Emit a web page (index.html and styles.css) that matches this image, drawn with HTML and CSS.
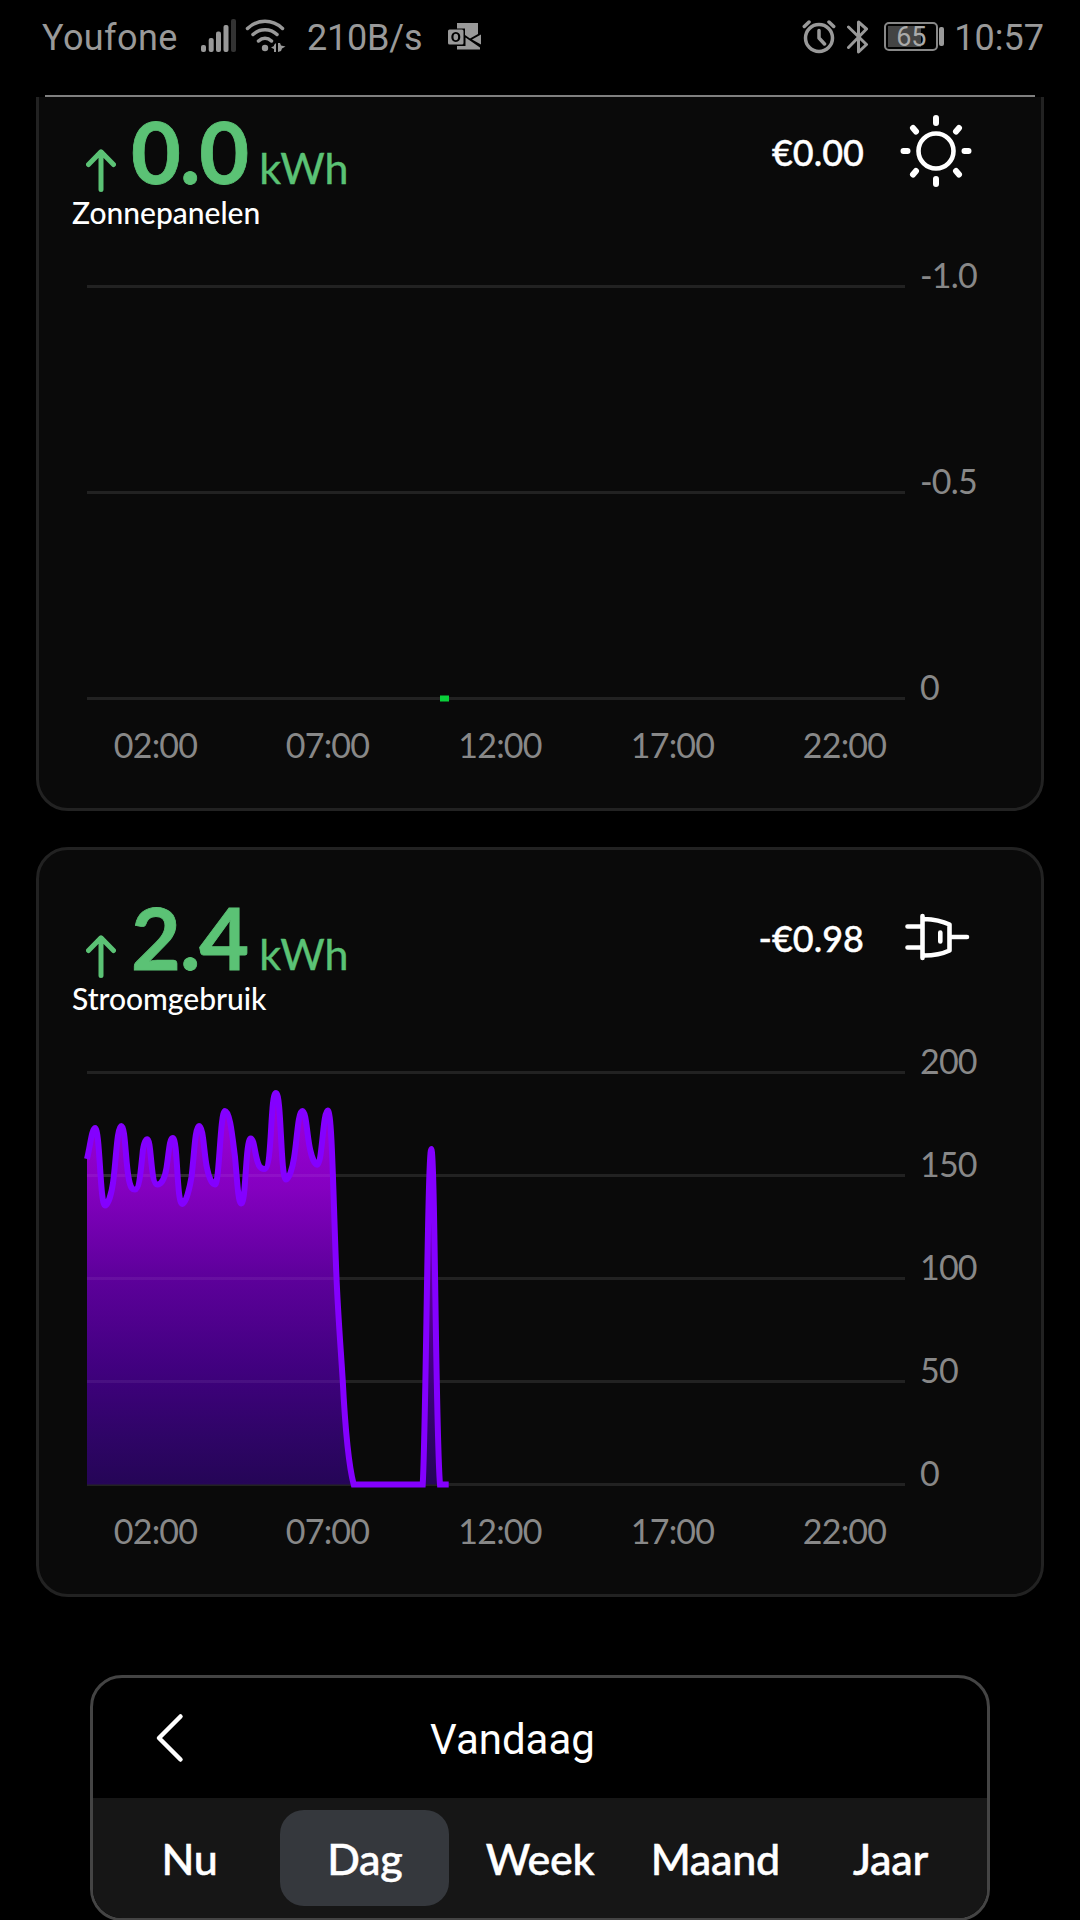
FILE: index.html
```html
<!DOCTYPE html>
<html lang="nl">
<head>
    <meta charset="UTF-8">
    <meta name="viewport" content="width=device-width, initial-scale=1.0">
    <title>Energie vandaag</title>
    <link rel="stylesheet" href="styles.css">
</head>
<body>
    <header class="status-bar">
        <span class="carrier">Youfone</span>
        <svg class="signal" width="36" height="34" viewBox="0 0 36 34">
            <rect x="0" y="26" width="5" height="7" rx="2"/>
            <rect x="7.7" y="19" width="5" height="14" rx="2"/>
            <rect x="15" y="12.5" width="5" height="20.5" rx="2"/>
            <rect x="22.5" y="6" width="5" height="27" rx="2"/>
            <rect class="off" x="30" y="0" width="5" height="33" rx="2"/>
        </svg>
        <svg class="wifi" width="42" height="34" viewBox="0 0 42 34">
            <path class="line" d="M2.500 9.500Q10 2.300 20 2.300T37.500 9.500M8 15.500Q13 10.700 20 10.700T32 15.500M13.500 22Q16.500 19.200 20 19.200T26.500 22"/>
            <circle cx="20" cy="29" r="3.200"/>
            <path d="M31 24v9h-2v-3l-3-1.500 3-1.500v-1zM33 24h2l1 2.500 4.500 1-3.500 2-1 2.500-3 1z"/>
        </svg>
        <span class="speed">210B/s</span>
        <svg class="outlook" width="34" height="28" viewBox="0 0 34 28">
            <path d="M9 0H30V11L22 15.500L17 12V5.500H9z"/>
            <path fill-rule="evenodd" d="M1.500 6.500H14Q15.500 6.500 15.500 8V20Q15.500 21.500 14 21.500H1.500Q0 21.500 0 20V8Q0 6.500 1.500 6.500zM7.800 9C4.800 9 3.300 11.200 3.300 14S4.800 19 7.800 19S12.300 16.800 12.300 14S10.800 9 7.800 9z"/>
            <ellipse cx="7.800" cy="14" rx="2.300" ry="3.200"/>
            <path d="M17.500 14.500L32 24.500V26.500H9V23H17.500zM33 11.500V21.500L24 16.500z"/>
        </svg>
        <div class="status-right">
            <svg class="alarm" width="34" height="36" viewBox="0 0 34 36">
                <circle class="line" cx="17" cy="19" r="13.500"/>
                <path class="line" d="M17 11.500V19L22.500 25M2.300 7.500L7 3M27 3L31.700 7.500"/>
            </svg>
            <svg class="bluetooth" width="22" height="36" viewBox="0 0 22 36">
                <path class="line" d="M1.500 8L19.500 25.500L11.500 33V3L19.500 10L1.500 28.500"/>
            </svg>
            <div class="battery"><span>65</span></div>
            <span class="clock">10:57</span>
        </div>
    </header>

    <main class="cards">
        <section class="card">
            <div class="card-head">
                <div>
                    <div class="value">
                        <svg class="arrow" width="30" height="43" viewBox="0 0 30 43">
                            <path d="M15 40.500V3M2.500 15.500L15 2.800L27.500 15.500"/>
                        </svg>
                        <span class="amount">0.0</span>
                        <span class="unit">kWh</span>
                    </div>
                    <div class="label">Zonnepanelen</div>
                </div>
                <span class="price">€0.00</span>
                <svg class="icon" width="80" height="80" viewBox="0 0 80 80">
                    <circle cx="40" cy="40" r="17.500"/>
                    <path class="rays" d="M40 7V12M40 68V73M7.500 40H11.500M68.500 40H72.500M17 17L20 20.500M60 20.500L63 17M17 63.500L20 60M60 60L63 63.500"/>
                </svg>
            </div>
            <svg class="chart" width="936" height="540" viewBox="0 0 936 540">
                <path class="grid" d="M15 32.500H833M15 238.500H833M15 444.500H833"/>
                <rect class="solar" x="368" y="441.500" width="9" height="6"/>
                <g class="axis">
                    <text x="848" y="33.500">-1.0</text>
                    <text x="848" y="239.500">-0.5</text>
                    <text x="848" y="446">0</text>
                </g>
                <g class="axis hours">
                    <text x="83.500" y="504">02:00</text>
                    <text x="255.500" y="504">07:00</text>
                    <text x="428" y="504">12:00</text>
                    <text x="600.500" y="504">17:00</text>
                    <text x="772.500" y="504">22:00</text>
                </g>
            </svg>
        </section>

        <section class="card">
            <div class="card-head">
                <div>
                    <div class="value">
                        <svg class="arrow" width="30" height="43" viewBox="0 0 30 43">
                            <path d="M15 40.500V3M2.500 15.500L15 2.800L27.500 15.500"/>
                        </svg>
                        <span class="amount">2.4</span>
                        <span class="unit">kWh</span>
                    </div>
                    <div class="label">Stroomgebruik</div>
                </div>
                <span class="price">-€0.98</span>
                <svg class="icon" width="80" height="80" viewBox="0 0 80 80">
                    <path d="M26.500 19V61M11.500 29.500H26M11.500 50.500H26M28 22Q43 22.500 53.500 27.500V53.500Q43 58.500 28 58.500M55 40H71M44.300 35.500V44.500"/>
                </svg>
            </div>
            <svg class="chart" width="936" height="540" viewBox="0 0 936 540">
                <defs>
                    <linearGradient id="usage" gradientUnits="userSpaceOnUse" x1="0" y1="53" x2="0" y2="444">
                        <stop offset="0" stop-color="#a800e4"/>
                        <stop offset="0.24" stop-color="#8a00c8"/>
                        <stop offset="0.46" stop-color="#6200a2"/>
                        <stop offset="0.7" stop-color="#430084"/>
                        <stop offset="0.88" stop-color="#30046a"/>
                        <stop offset="1" stop-color="#26055a"/>
                    </linearGradient>
                </defs>
                <path class="grid" d="M15 32.500H833M15 135.500H833M15 238.500H833M15 341.500H833M15 444.500H833"/>
                <path fill="url(#usage)" fill-opacity="0.96" d="M15 119C18 107 20 88 23 88C28 88 28 165.500 33 165.500C36 165.500 39.500 153 41 143C44 122 45 86 49.300 86C53.500 86 53.500 124 57 140C59 149.500 61 149.500 63 149.500C67.500 149.500 69 128 70.500 114C71.500 103 73.500 99.300 75.300 99.300C79.500 99.300 78.500 144.500 85.300 144.500C90 144.500 93 137 94.500 128C97 112 97.500 98 100.700 98C106 98 104.500 164 110.300 164C114 164 118 146 119.500 137C122 118 123 86 127 86C131.500 86 132 115 135 128C137 138 140 144.500 143 144.500C147.500 144.500 148 71 153 71C158 71 160.500 98 163 117C165 137 166 163.500 169.300 163.500C174 163.500 173.500 98.500 178.700 98.500C182.500 98.500 183 118 187 125.500C189 129 191 129 192.500 129C200.500 129 198 53 204 53C209.500 53 208.500 139.500 214 139.500C217 139.500 220.500 128 222 118C225 101 226 71 230.300 71C234.500 71 235 98 238.500 111C240 118 243 124.700 245.500 124.700C250 124.700 251 70.500 255.700 70.500C260 70.500 261 150 264.300 233C266 275 268.500 305 270.700 340C273 385 276.500 425 281.700 444.500H350.700C354 390 355.500 109 359.300 109C363 109 363.500 390 368 444.500H15z"/>
                <path class="grid over" d="M15 135.500H264M15 238.500H264M15 341.500H270"/>
                <path class="usage-line" d="M15 119C18 107 20 88 23 88C28 88 28 165.500 33 165.500C36 165.500 39.500 153 41 143C44 122 45 86 49.300 86C53.500 86 53.500 124 57 140C59 149.500 61 149.500 63 149.500C67.500 149.500 69 128 70.500 114C71.500 103 73.500 99.300 75.300 99.300C79.500 99.300 78.500 144.500 85.300 144.500C90 144.500 93 137 94.500 128C97 112 97.500 98 100.700 98C106 98 104.500 164 110.300 164C114 164 118 146 119.500 137C122 118 123 86 127 86C131.500 86 132 115 135 128C137 138 140 144.500 143 144.500C147.500 144.500 148 71 153 71C158 71 160.500 98 163 117C165 137 166 163.500 169.300 163.500C174 163.500 173.500 98.500 178.700 98.500C182.500 98.500 183 118 187 125.500C189 129 191 129 192.500 129C200.500 129 198 53 204 53C209.500 53 208.500 139.500 214 139.500C217 139.500 220.500 128 222 118C225 101 226 71 230.300 71C234.500 71 235 98 238.500 111C240 118 243 124.700 245.500 124.700C250 124.700 251 70.500 255.700 70.500C260 70.500 261 150 264.300 233C266 275 268.500 305 270.700 340C273 385 276.500 425 281.700 444.500H350.700C354 390 355.500 109 359.300 109C363 109 363.500 390 368 444.500H376.700"/>
                <g class="axis">
                    <text x="848" y="33.500">200</text>
                    <text x="848" y="136.500">150</text>
                    <text x="848" y="239.500">100</text>
                    <text x="848" y="342.500">50</text>
                    <text x="848" y="446">0</text>
                </g>
                <g class="axis hours">
                    <text x="83.500" y="504">02:00</text>
                    <text x="255.500" y="504">07:00</text>
                    <text x="428" y="504">12:00</text>
                    <text x="600.500" y="504">17:00</text>
                    <text x="772.500" y="504">22:00</text>
                </g>
            </svg>
        </section>
    </main>

    <nav class="period">
        <div class="period-head">
            <svg class="back" width="30" height="50" viewBox="0 0 30 50">
                <path d="M25.500 3.500L4 25L25.500 46.500"/>
            </svg>
            <span>Vandaag</span>
        </div>
        <div class="tabs">
            <a class="tab">Nu</a>
            <a class="tab active">Dag</a>
            <a class="tab">Week</a>
            <a class="tab">Maand</a>
            <a class="tab">Jaar</a>
        </div>
    </nav>
</body>
</html>
```

FILE: styles.css
```css
* {
    box-sizing: border-box;
}
body {
    margin: 0;
    width: 1080px;
    height: 1920px;
    overflow: hidden;
    background-color: #000;
    color: #fff;
    font-family: Lato, sans-serif;
    font-weight: 500;
}
svg {
    display: block;
    flex: none;
}

/* status bar */
.status-bar {
    display: flex;
    align-items: flex-start;
    height: 97px;
    margin: 0 45px;
    border-bottom: 2px solid #808080;
    color: #999;
    font-family: Roboto, sans-serif;
    font-size: 36px;
    font-weight: 400;
    line-height: 42px;
}
.status-bar span {
    white-space: nowrap;
}
.status-bar svg {
    fill: #999;
}
.status-bar .line {
    fill: none;
    stroke: #999;
    stroke-width: 3.5;
    stroke-linecap: round;
    stroke-linejoin: round;
}
.status-bar .off {
    fill: #333;
}
.carrier {
    width: 156px;
    margin: 17px 0 0 -3px;
    letter-spacing: 0.4px;
}
.signal {
    margin-top: 19px;
    margin-left: 3px;
}
.wifi {
    margin-top: 19px;
    margin-left: 8px;
}
.speed {
    width: 141px;
    margin-top: 17px;
    margin-left: 20px;
    letter-spacing: -0.2px;
}
.outlook {
    margin-top: 23px;
}
.status-right {
    display: flex;
    margin-left: auto;
    margin-right: -9px;
}
.alarm {
    margin-top: 19px;
}
.bluetooth {
    margin-top: 19px;
    margin-left: 11px;
}
.bluetooth .line {
    stroke-width: 3;
}
.battery {
    position: relative;
    width: 54px;
    height: 29px;
    margin: 22px 16px 0 15px;
    border: 2px solid #888;
    border-radius: 5px;
    background: linear-gradient(#444, #444) 2px 2px / 33px 21px no-repeat;
    font-size: 27px;
    line-height: 27px;
    text-align: center;
    color: #aaa;
}
.battery::after {
    content: "";
    position: absolute;
    top: 3px;
    right: -8px;
    width: 5px;
    height: 19px;
    border-radius: 2px;
    background-color: #999;
}
.clock {
    margin-top: 17px;
}

/* cards */
.cards {
    height: 1500px;
    padding: 0 36px;
    overflow: hidden;
}
.card {
    height: 750px;
    border: 3px solid #222;
    border-radius: 32px;
    background-color: #0a0a0a;
}
.card:first-child {
    margin-top: -36px;
}
.card + .card {
    margin-top: 36px;
}
.card-head {
    display: flex;
    height: 190px;
    padding: 47px 65px 0 33px;
}
.value {
    display: flex;
    align-items: baseline;
    height: 80px;
    line-height: 80px;
    color: #5bc275;
}
.arrow {
    align-self: flex-start;
    margin: 38px 0 0 14px;
    fill: none;
    stroke: #5bc275;
    stroke-width: 5;
    stroke-linecap: round;
    stroke-linejoin: round;
}
.amount {
    margin-left: 15px;
    font-size: 86px;
    font-weight: bold;
    letter-spacing: -1px;
    -webkit-text-stroke: 0.8px;
}
.unit {
    margin-left: 11px;
    font-size: 43px;
    font-weight: 400;
    -webkit-text-stroke: 0.4px;
}
.label {
    margin-top: 3px;
    font-size: 30px;
    line-height: 36px;
}
.price {
    margin: 19px 32px 0 auto;
    font-size: 36px;
    line-height: 44px;
    -webkit-text-stroke: 0.4px;
}
.icon {
    fill: none;
    stroke: #fff;
    stroke-width: 4.6;
    stroke-linecap: round;
    stroke-linejoin: round;
}
.icon .rays {
    stroke-width: 6;
}

/* charts */
.chart {
    margin-left: 33px;
}
.grid {
    stroke: #222;
    stroke-width: 3;
}
.grid.over {
    stroke: rgba(255, 255, 255, 0.06);
}
.solar {
    fill: #0ad03a;
}
.usage-line {
    fill: none;
    stroke: #8400ff;
    stroke-width: 6;
}
.axis {
    fill: #888;
    font-size: 34px;
    font-weight: 400;
    letter-spacing: -0.8px;
}
.hours {
    text-anchor: middle;
}

/* period picker */
.period {
    width: 900px;
    height: 246px;
    margin: 78px auto 0;
    border: 3px solid #444;
    border-radius: 32px;
    overflow: hidden;
}
.period-head {
    display: flex;
    align-items: center;
    height: 120px;
    padding-left: 62px;
    font-family: Roboto, sans-serif;
    font-size: 42px;
    font-weight: 400;
    line-height: 50px;
}
.period-head span {
    flex: 1;
    padding: 3px 147px 0 0;
    text-align: center;
}
.back {
    fill: none;
    stroke: #fff;
    stroke-width: 4.5;
    stroke-linecap: round;
    stroke-linejoin: round;
}
.tabs {
    display: flex;
    gap: 6px;
    height: 120px;
    padding: 12px;
    background-color: #161616;
}
.tab {
    flex: 1;
    border-radius: 24px;
    font-size: 43px;
    line-height: 98px;
    letter-spacing: -0.3px;
    text-align: center;
    -webkit-text-stroke: 0.5px;
}
.tab.active {
    background-color: #35383d;
}
```
